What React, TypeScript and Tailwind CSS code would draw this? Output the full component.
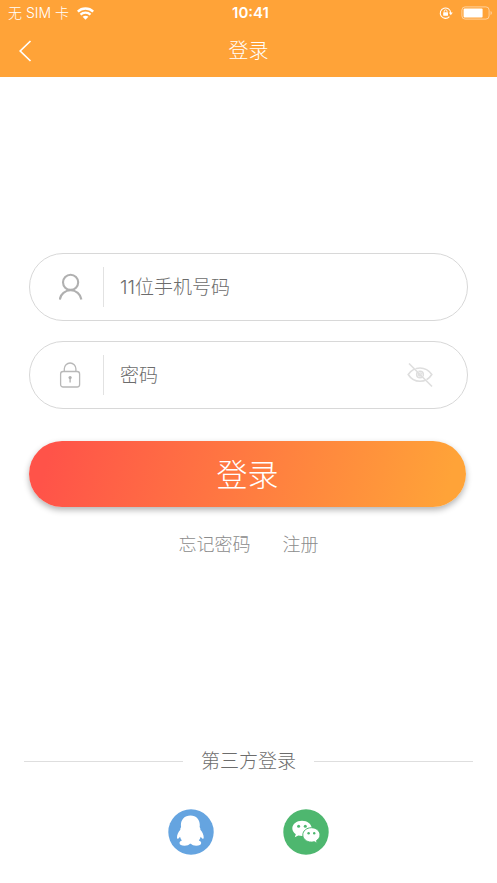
import React, { useState } from 'react';

const FONT = "font-['Inter','Noto_Sans_CJK_SC',sans-serif]";

const WifiIcon = () => (
  <svg width="17" height="13" viewBox="0 0 17 13" fill="none" aria-hidden="true">
    <path d="M.8 4.600C5 .4 12 .4 16.200 4.600" stroke="white" strokeWidth="2.400" />
    <path d="M3.500 7.600c2.800-2.600 7.200-2.600 10 0" stroke="white" strokeWidth="2.300" />
    <path d="M8.500 12.700 5.600 9.800c1.700-1.500 4.100-1.500 5.800 0z" fill="white" />
  </svg>
);

const RotationLockIcon = () => (
  <svg width="14" height="14" viewBox="0 0 14 14" fill="none" aria-hidden="true">
    <path d="M10.400 10.600A5.200 5.200 0 1 1 11.700 7" stroke="white" strokeWidth="1.100" />
    <path d="M9.800 6.600h4l-2 2.600z" fill="white" />
    <rect x="4.200" y="6.200" width="4.800" height="3.500" rx=".5" fill="white" />
    <path d="M5.200 6.400V5.300a1.400 1.400 0 0 1 2.800 0v1.100" stroke="white" strokeWidth=".9" />
  </svg>
);

const BatteryIcon = () => (
  <svg width="32" height="14" viewBox="0 0 32 14" fill="none" aria-hidden="true">
    <rect x=".9" y=".9" width="27.200" height="12.200" rx="3.200" stroke="white" strokeOpacity=".5" />
    <rect x="2.600" y="2.600" width="19" height="8.800" rx="1" fill="white" />
    <path d="M29.600 5v4c1.500-.6 1.500-3.400 0-4z" fill="white" fillOpacity=".6" />
  </svg>
);

const BackIcon = () => (
  <svg width="13" height="22" viewBox="0 0 13 22" fill="none" aria-hidden="true">
    <path d="M11.500 1 1.200 11l10.300 10" stroke="white" strokeWidth="1.700" />
  </svg>
);

const UserIcon = () => (
  <svg width="24" height="28" viewBox="0 0 24 28" fill="none" stroke="#b0b0b0" strokeWidth="2.100" aria-hidden="true">
    <circle cx="11.600" cy="9.300" r="7.600" />
    <path d="M.8 26.500c.7-5.500 5.500-9.200 10.800-9.200s10.100 3.700 10.800 9.200" />
  </svg>
);

const LockIcon = () => (
  <svg width="24" height="28" viewBox="0 0 24 28" fill="none" stroke="#b8b8b8" strokeWidth="1.300" aria-hidden="true">
    <rect x="1.600" y="10.500" width="19" height="15.500" rx="2.500" />
    <path d="M5.300 10.500V7.800a5.800 5.800 0 0 1 11.600 0v2.700" />
    <circle cx="11.100" cy="16.600" r="1.600" fill="#b0b0b0" stroke="none" />
    <path d="M11.100 17v4.600" stroke="#b0b0b0" strokeWidth="1.300" />
  </svg>
);

const EyeIcon = ({ off }: { off: boolean }) => (
  <svg width="26" height="26" viewBox="0 0 26 26" fill="none" stroke="#dedede" strokeWidth="1.600" aria-hidden="true">
    <path d="M1.200 12.500C4 8.500 8 6 13 6s9 2.500 11.800 6.500c-2.800 4.500-6.800 6.800-11.800 6.800S4 17 1.200 12.500z" />
    <circle cx="13" cy="12.500" r="3.300" />
    <circle cx="13" cy="12.500" r="1.400" />
    {off && (
      <>
        <path d="m3.200 1.800 22 22" stroke="white" strokeWidth="1" />
        <path d="m2 1.500 23 23" />
      </>
    )}
  </svg>
);

const QQIcon = () => (
  <svg width="46" height="46" viewBox="0 0 46 46" aria-hidden="true">
    <circle cx="23" cy="23" r="22.700" fill="#65a4e0" />
    <path
      fill="white"
      d="M22.500 6.600c-5.900 0-9.600 4.200-9.600 9.500 0 .7.100 1.400.2 2-.7.800-.9 1.700-.8 2.600-2 2.300-3.400 5.300-3.300 7.700.1 1.600.8 1.800 1.700.9.500-.5 1-1.100 1.300-1.600.3 1.400 1 2.700 1.900 3.800-1.500.5-2.400 1.400-2.400 2.500 0 1.700 2 2.700 5 2.700 2.500 0 4.600-.7 5.500-1.900h.9c.9 1.200 3 1.900 5.300 1.900 3 0 5-1 5-2.700 0-1.100-.9-2-2.400-2.500.9-1.100 1.600-2.400 1.900-3.800.3.500.8 1.100 1.300 1.600.9.900 1.600.7 1.700-.9.100-2.400-1.300-5.400-3.300-7.700.1-.9-.1-1.800-.8-2.600.1-.6.200-1.300.2-2 0-5.300-3.400-9.500-9.300-9.500z"
    />
  </svg>
);

const WechatIcon = () => (
  <svg width="46" height="46" viewBox="0 0 46 46" aria-hidden="true">
    <circle cx="23" cy="23" r="22.700" fill="#4eb76f" />
    <path fill="white" d="M19 11.700c-5.400 0-9.700 3.400-9.700 7.600 0 2.400 1.300 4.500 3.500 5.900l-1 3 3.500-1.700c1.200.3 2.400.5 3.700.5 5.400 0 9.700-3.400 9.700-7.700 0-4.200-4.300-7.600-9.700-7.600z" />
    <circle cx="15.600" cy="17.300" r="1.500" fill="#4eb76f" />
    <circle cx="22.300" cy="17.300" r="1.500" fill="#4eb76f" />
    <path
      fill="white"
      stroke="#4eb76f"
      strokeWidth="1"
      d="M28.400 18.700c-4.800 0-8.600 3.200-8.600 7.200s3.800 7.200 8.600 7.200c1 0 2-.2 2.900-.4l3 1.500-.8-2.600c2.100-1.300 3.500-3.300 3.500-5.700 0-4-3.800-7.200-8.600-7.200z"
    />
    <circle cx="25.600" cy="24.200" r="1.200" fill="#4eb76f" />
    <circle cx="31.200" cy="24.200" r="1.200" fill="#4eb76f" />
  </svg>
);

interface FieldProps {
  id: string;
  label: string;
  type: string;
  icon: React.ReactNode;
  children?: React.ReactNode;
}

const Field: React.FC<FieldProps> = ({ id, label, type, icon, children }) => {
  const [value, setValue] = useState('');

  return (
    <div className="flex items-center h-[68px] pl-[29px] pr-[34px] rounded-full border border-[#d8d8d8] bg-white">
      <label htmlFor={id} aria-label={label} className="shrink-0">
        {icon}
      </label>
      <div className="h-10 w-px ml-5 mr-4 bg-[#e2e2e2] shrink-0" />
      <input
        id={id}
        type={type}
        value={value}
        onChange={(e) => setValue(e.target.value)}
        placeholder={label}
        className="flex-1 min-w-0 pt-0.5 text-[19px] leading-7 font-light text-[#555] placeholder:text-[#6c6c6c] outline-none bg-transparent"
      />
      {children}
    </div>
  );
};

export default function App() {
  const [showPassword, setShowPassword] = useState(false);

  return (
    <div className={`min-h-screen flex flex-col bg-white ${FONT}`}>
      <header className="bg-[#ffa338] text-white">
        <div className="grid grid-cols-3 items-center h-[26px] pl-2 pr-1 text-sm">
          <div className="flex items-center gap-2 font-light">
            <span>无 SIM 卡</span>
            <WifiIcon />
          </div>
          <span className="text-center text-[15px] font-semibold">10:41</span>
          <div className="flex items-center justify-end gap-2">
            <RotationLockIcon />
            <BatteryIcon />
          </div>
        </div>
        <div className="grid grid-cols-3 items-center h-[51px] px-[19px] pb-0.5">
          <button type="button" aria-label="返回" className="justify-self-start">
            <BackIcon />
          </button>
          <h1 className="text-center text-xl font-light">登录</h1>
        </div>
      </header>

      <main className="flex-1 flex flex-col px-[29px] pt-44">
        <form onSubmit={(e) => e.preventDefault()} className="flex flex-col gap-5">
          <Field id="phone" label="11位手机号码" type="tel" icon={<UserIcon />} />
          <Field id="password" label="密码" type={showPassword ? 'text' : 'password'} icon={<LockIcon />}>
            <button type="button" aria-label="显示密码" onClick={() => setShowPassword(!showPassword)}>
              <EyeIcon off={!showPassword} />
            </button>
          </Field>
          <button
            type="submit"
            className="h-[66px] mt-3 mr-0.5 pt-0.5 rounded-full bg-[linear-gradient(105deg,#ff5349_5%,#ffa338_95%)] text-white text-[31px] font-light shadow-[0_3px_6px_rgba(0,0,0,0.3)]"
          >
            登录
          </button>
        </form>
        <div className="flex justify-center gap-8 mt-6 text-lg font-light text-[#8c8c8c]">
          <a href="#forgot">忘记密码</a>
          <a href="#register">注册</a>
        </div>
      </main>

      <footer className="px-6 pb-7">
        <div className="flex items-center gap-[18px]">
          <div className="flex-1 h-px bg-[#dedede]" />
          <h2 className="pt-0.5 text-[19px] leading-7 font-light text-[#6c6c6c]">第三方登录</h2>
          <div className="flex-1 h-px bg-[#dedede]" />
        </div>
        <div className="flex justify-center gap-[69px] mt-[33px]">
          <button type="button" aria-label="QQ登录">
            <QQIcon />
          </button>
          <button type="button" aria-label="微信登录">
            <WechatIcon />
          </button>
        </div>
      </footer>
    </div>
  );
}
